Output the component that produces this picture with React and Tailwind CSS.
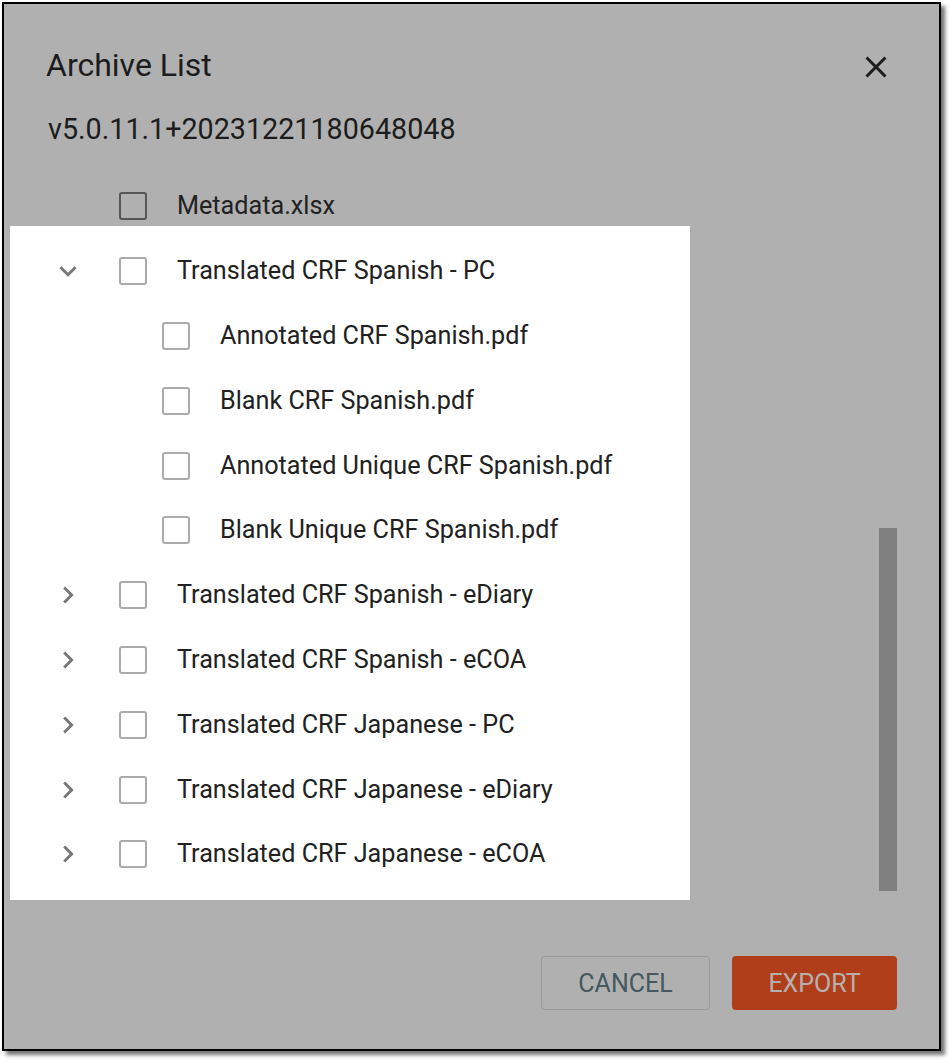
import React from "react";

const FONT = { fontFamily: "Roboto, 'Noto Sans', 'Liberation Sans', sans-serif" };

function ChevronRight() {
  return (
    <svg width="34" height="34" viewBox="0 0 24 24" className="shrink-0">
      <path d="M10 6L8.59 7.41 13.17 12l-4.58 4.59L10 18l6-6z" fill="#767676" />
    </svg>
  );
}

function ChevronDown() {
  return (
    <svg width="34" height="34" viewBox="0 0 24 24" className="shrink-0">
      <path d="M16.59 8.59L12 13.17 7.41 8.59 6 10l6 6 6-6z" fill="#767676" />
    </svg>
  );
}

function Box({ dark }) {
  return (
    <div
      className={
        "w-[28px] h-[28px] shrink-0 rounded-[3px] border-[2.5px] " +
        (dark ? "border-[#565656]" : "border-[#ababab]")
      }
    />
  );
}

const rows = [
  { label: "Metadata.xlsx", level: 0, chevron: null, dark: true },
  { label: "Translated CRF Spanish - PC", level: 0, chevron: "down" },
  { label: "Annotated CRF Spanish.pdf", level: 1 },
  { label: "Blank CRF Spanish.pdf", level: 1 },
  { label: "Annotated Unique CRF Spanish.pdf", level: 1 },
  { label: "Blank Unique CRF Spanish.pdf", level: 1 },
  { label: "Translated CRF Spanish - eDiary", level: 0, chevron: "right" },
  { label: "Translated CRF Spanish - eCOA", level: 0, chevron: "right" },
  { label: "Translated CRF Japanese - PC", level: 0, chevron: "right" },
  { label: "Translated CRF Japanese - eDiary", level: 0, chevron: "right" },
  { label: "Translated CRF Japanese - eCOA", level: 0, chevron: "right" },
];

function Row({ row }) {
  if (row.level === 1) {
    return (
      <div className="flex items-center h-[64.8px] pl-[158px]">
        <Box />
        <span className="ml-[30px] text-[25.2px] text-[#212121] leading-[32px] whitespace-nowrap">
          {row.label}
        </span>
      </div>
    );
  }
  return (
    <div className="flex items-center h-[64.8px] pl-[47px]">
      <div className="w-[34px] h-[34px] shrink-0 flex items-center justify-center">
        {row.chevron === "down" && <ChevronDown />}
        {row.chevron === "right" && <ChevronRight />}
      </div>
      <div className="ml-[34px]">
        <Box dark={row.dark} />
      </div>
      <span className="ml-[30px] text-[25.2px] text-[#212121] leading-[32px] whitespace-nowrap">
        {row.label}
      </span>
    </div>
  );
}

export default function App() {
  return (
    <div className="w-[950px] h-[1062px] bg-white overflow-hidden" style={FONT}>
      <div className="ml-[2px] mt-[2px] w-[939px] h-[1049px] border-2 border-black bg-[#b0b0b0] shadow-[4px_4px_4px_rgba(0,0,0,0.55)] relative flex flex-col">
        {/* highlight (unmasked) region */}
        <div className="absolute left-[6px] top-[222px] w-[680px] h-[674px] bg-white" />

        {/* header */}
        <div className="relative flex items-center justify-between h-[40px] mt-[41px] pl-[42px] pr-[45px]">
          <span className="text-[32px] leading-[40px] text-[#1c1c1c]">Archive List</span>
          <svg width="36" height="36" viewBox="0 0 24 24" className="mt-[4px]">
            <path
              d="M19 6.41L17.59 5 12 10.59 6.41 5 5 6.41 10.59 12 5 17.59 6.41 19 12 13.41 17.59 19 19 17.59 13.41 12z"
              fill="#1c1c1c"
            />
          </svg>
        </div>

        <div className="relative mt-[26px] pl-[44px] h-[36px] text-[28.7px] leading-[36px] text-[#1c1c1c]">
          v5.0.11.1+20231221180648048
        </div>

        {/* list + scrollbar */}
        <div className="relative mt-[27px] flex h-[717px]">
          <div className="flex-1 flex flex-col">
            {rows.map((r) => (
              <Row key={r.label} row={r} />
            ))}
          </div>
          <div className="w-[18px] mr-[42px] shrink-0">
            <div className="mt-[354px] h-[363px] bg-[#808080]" />
          </div>
        </div>

        <div className="flex-1" />

        {/* footer */}
        <div className="relative flex justify-end gap-[22px] pr-[42px] pb-[39px]">
          <button className="w-[169px] h-[54px] rounded-[4px] border border-[#999999] text-[25px] text-[#46585f] leading-none">
            CANCEL
          </button>
          <button className="w-[165px] h-[54px] rounded-[4px] bg-[#b13e1b] text-[25px] text-[#b6b1af] leading-none">
            EXPORT
          </button>
        </div>
      </div>
    </div>
  );
}
